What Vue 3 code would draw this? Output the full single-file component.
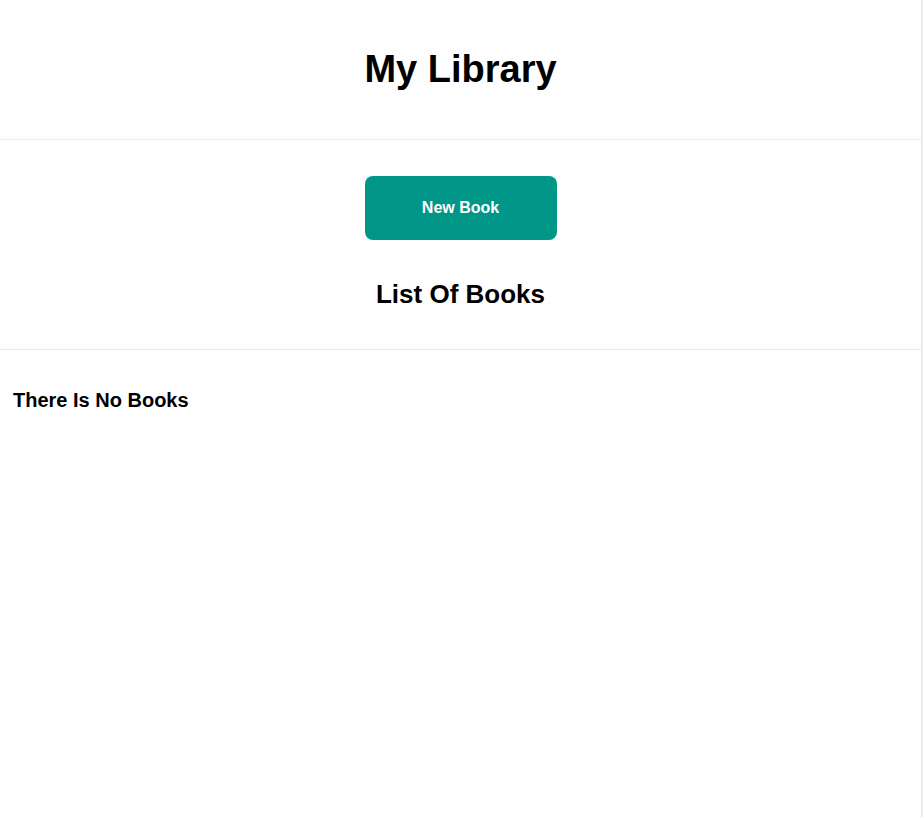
<script setup>
import { ref } from 'vue'

const books = ref([])

function addBook() {
  books.value.push({ title: 'Untitled' })
}
</script>

<template>
  <div class="library">
    <header class="header">
      <h1>My Library</h1>
    </header>
    <section class="toolbar">
      <button type="button" class="new-book" @click="addBook">New Book</button>
      <h2>List Of Books</h2>
    </section>
    <main class="content">
      <h3 v-if="books.length === 0">There Is No Books</h3>
      <ul v-else>
        <li v-for="(book, index) in books" :key="index">{{ book.title }}</li>
      </ul>
    </main>
  </div>
</template>

<style>
body {
  margin: 0;
  background: #fefefe;
}
</style>

<style scoped>
.library {
  box-sizing: border-box;
  min-height: 100vh;
  border-right: 2px solid #ececec;
  color: #000;
  font-family: "Liberation Sans", Arial, sans-serif;
}

h1,
h2,
h3 {
  margin: 0;
  font-weight: 700;
}

.header {
  padding: 44px 12px;
  border-bottom: 1px solid #eaeaea;
  text-align: center;
}

h1 {
  font-size: 38px;
  line-height: 51px;
}

.toolbar {
  display: flex;
  flex-direction: column;
  align-items: center;
  gap: 36px;
  padding: 36px 12px;
  border-bottom: 1px solid #eaeaea;
}

.new-book {
  width: 192px;
  height: 64px;
  padding: 0;
  border: 0;
  border-radius: 8px;
  background: #009688;
  color: #fff;
  font: inherit;
  font-size: 16px;
  font-weight: 700;
  cursor: pointer;
}

h2 {
  font-size: 26px;
  line-height: 37px;
}

.content {
  padding: 36px 13px;
}

h3 {
  font-size: 20px;
  line-height: 28px;
}
</style>
